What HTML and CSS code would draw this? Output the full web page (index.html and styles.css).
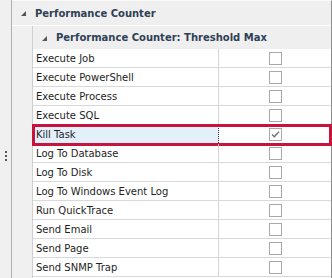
FILE: index.html
```html
<!DOCTYPE html>
<html>
<head>
<meta charset="utf-8">
<link rel="stylesheet" href="styles.css">
</head>
<body>
<div class="panel">
  <div class="gutter">
    <div class="grip"><span></span><span></span><span></span></div>
  </div>
  <div class="grid">
    <div class="cat cat1"><span class="tri"></span><span class="cat-title">Performance Counter</span></div>
    <div class="nest">
      <div class="indent"></div>
      <div class="nest-body">
        <div class="cat cat2"><span class="tri"></span><span class="cat-title">Performance Counter: Threshold Max</span></div>
        <div class="row"><div class="name">Execute Job</div><div class="val"><span class="cb"></span></div></div>
        <div class="row"><div class="name">Execute PowerShell</div><div class="val"><span class="cb"></span></div></div>
        <div class="row"><div class="name">Execute Process</div><div class="val"><span class="cb"></span></div></div>
        <div class="row"><div class="name">Execute SQL</div><div class="val"><span class="cb"></span></div></div>
        <div class="row selected"><div class="name">Kill Task</div><div class="val"><span class="cb"><svg width="11" height="11" viewBox="0 0 11 11"><path d="M2 5.5 L4.3 7.8 L9 2.8" fill="none" stroke="#707070" stroke-width="1.4"/></svg></span></div><div class="hl"></div></div>
        <div class="row"><div class="name">Log To Database</div><div class="val"><span class="cb"></span></div></div>
        <div class="row"><div class="name">Log To Disk</div><div class="val"><span class="cb"></span></div></div>
        <div class="row"><div class="name">Log To Windows Event Log</div><div class="val"><span class="cb"></span></div></div>
        <div class="row"><div class="name">Run QuickTrace</div><div class="val"><span class="cb"></span></div></div>
        <div class="row"><div class="name">Send Email</div><div class="val"><span class="cb"></span></div></div>
        <div class="row"><div class="name">Send Page</div><div class="val"><span class="cb"></span></div></div>
        <div class="row"><div class="name">Send SNMP Trap</div><div class="val"><span class="cb"></span></div></div>
      </div>
    </div>
  </div>
</div>
</body>
</html>
```
FILE: styles.css
```css
html, body {
  margin: 0;
  padding: 0;
  background: #ffffff;
  font-family: "DejaVu Sans", "Liberation Sans", sans-serif;
  font-size: 10px;
  color: #1e1e1e;
  overflow: hidden;
}
.panel {
  display: flex;
  width: 332px;
  height: 278px;
}
.gutter {
  width: 11px;
  background: #f0f0f0;
  border-right: 1px solid #b0b0b0;
  display: flex;
  flex-direction: column;
  align-items: center;
}
.grip {
  margin-top: 151px;
  margin-left: 0px;
  display: flex;
  flex-direction: column;
  gap: 2px;
}
.grip span {
  display: block;
  width: 2px;
  height: 2px;
  background: #555;
}
.grid {
  width: 319px;
  border-right: 1px solid #8e8e8e;
  border-top: 1px solid #fafafa;
  background: #f0f0f0;
  display: flex;
  flex-direction: column;
}
.cat {
  display: flex;
  align-items: center;
  background: #efefef;
  font-weight: bold;
  color: #2f3f55;
}
.cat1 {
  height: 24px;
  border-bottom: 1px solid #ffffff;
  padding-left: 9px;
}
.cat2 {
  height: 23px;
  padding-left: 9px;
}
.tri {
  width: 0;
  height: 0;
  border-left: 5px solid transparent;
  border-bottom: 5px solid #555;
  margin-right: 9px;
  margin-top: 1px;
}
.nest {
  display: flex;
  flex: 1;
}
.indent {
  width: 20px;
  background: #f0f0f0;
}
.nest-body {
  flex: 1;
  border-left: 1px solid #cfcfcf;
  background: #ffffff;
}
.row {
  position: relative;
  display: flex;
  height: 18px;
  border-bottom: 1px solid #d9d9d9;
}
.name {
  width: 182px;
  padding-left: 3px;
  border-right: 1px solid #d4d4d4;
  display: flex;
  align-items: center;
  white-space: nowrap;
}
.val {
  flex: 1;
  display: flex;
  align-items: center;
  justify-content: center;
}
.cb {
  box-sizing: border-box;
  width: 13px;
  height: 13px;
  border: 1px solid #a8a8a8;
  background: #fff;
  display: flex;
  align-items: center;
  justify-content: center;
}
.selected .name {
  background: #e3f0fa;
  border-right: 1px dotted #333;
}
.hl {
  position: absolute;
  left: -1px;
  top: -1px;
  width: 300px;
  height: 22px;
  box-sizing: border-box;
  border: 3px solid #c8143c;
  pointer-events: none;
}
```
